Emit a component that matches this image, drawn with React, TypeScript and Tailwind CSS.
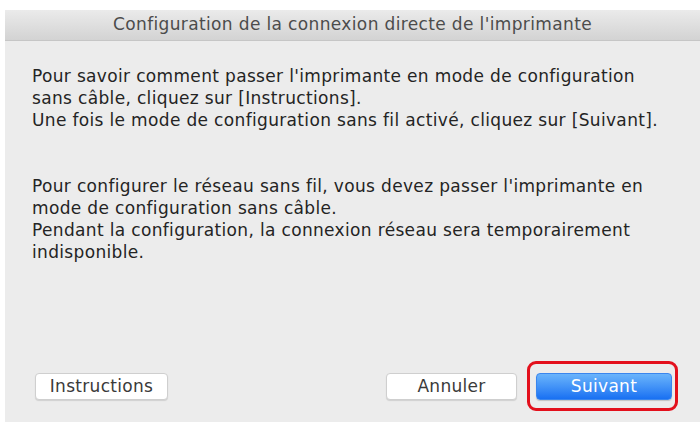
export default function App() {
  return (
    <div className="w-[700px] h-[429px] bg-white overflow-hidden" style={{ fontFamily: '"DejaVu Sans", "Liberation Sans", sans-serif' }}>
      <div className="ml-[5px] mt-[10px] h-[412px] flex flex-col bg-[#ececec]">
        <div className="h-[31px] shrink-0 flex items-center justify-center bg-gradient-to-b from-[#ebebeb] to-[#d3d3d3] border-b border-[#c6c6c6] text-[17px] tracking-[0.36px] text-[#4c4c4c]">
          Configuration de la connexion directe de l'imprimante
        </div>
        <div className="flex-1 pl-[27px] pt-[24px] text-[17px] tracking-[0.34px] leading-[22px] text-[#242424]">
          <p>
            Pour savoir comment passer l'imprimante en mode de configuration
            <br />
            sans câble, cliquez sur [Instructions].
            <br />
            Une fois le mode de configuration sans fil activé, cliquez sur [Suivant].
          </p>
          <p className="mt-[44px]">
            Pour configurer le réseau sans fil, vous devez passer l'imprimante en
            <br />
            mode de configuration sans câble.
            <br />
            Pendant la configuration, la connexion réseau sera temporairement
            <br />
            indisponible.
          </p>
        </div>
        <div className="h-[61px] shrink-0 flex items-start justify-between pl-[30px] pr-[22px]">
          <button className="mt-[12px] w-[133px] h-[27px] rounded-[4px] bg-white border border-[#cfcfcf] shadow-[0_1px_1px_rgba(0,0,0,0.12)] text-[17px] tracking-[0.3px] text-[#3a3a3a]">
            Instructions
          </button>
          <div className="flex items-start gap-[10px]">
            <button className="mt-[12px] w-[131px] h-[27px] rounded-[4px] bg-white border border-[#cfcfcf] shadow-[0_1px_1px_rgba(0,0,0,0.12)] text-[17px] tracking-[0.3px] text-[#3a3a3a]">
              Annuler
            </button>
            <div className="rounded-[9px] border-[3px] border-[#e3101c] pl-[6px] pr-[3px] pt-[9px] pb-[8px]">
              <button className="block w-[136px] h-[27px] rounded-[4px] border border-[#3a86ee] bg-gradient-to-b from-[#6ab4fb] to-[#1870f2] text-[17px] tracking-[0.3px] text-white shadow-[0_1px_1px_rgba(0,0,0,0.18)]">
                Suivant
              </button>
            </div>
          </div>
        </div>
      </div>
    </div>
  );
}
